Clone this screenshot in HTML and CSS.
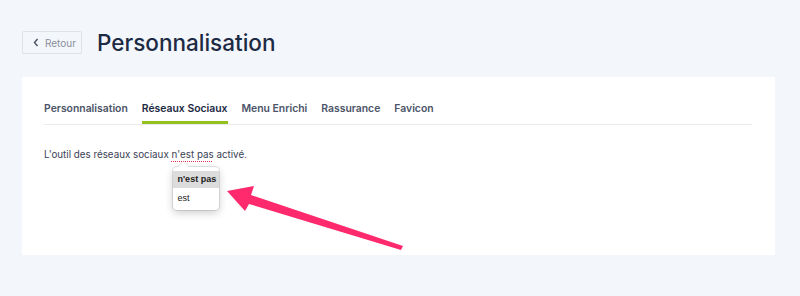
FILE: index.html
```html
<!DOCTYPE html>
<html lang="fr">
<head>
<meta charset="utf-8">
<link rel="stylesheet" href="styles.css">
</head>
<body>
<div class="page">
  <header class="header">
    <button class="back"><svg class="back-icon" width="6" height="9" viewBox="0 0 6 9"><path d="M4.5 1 L1.5 4.5 L4.5 8" fill="none" stroke="#4a5060" stroke-width="1.4"/></svg>Retour</button>
    <h1 class="title">Personnalisation</h1>
  </header>
  <section class="card">
    <nav class="tabs">
      <a class="tab">Personnalisation</a>
      <a class="tab active">Réseaux Sociaux</a>
      <a class="tab">Menu Enrichi</a>
      <a class="tab">Rassurance</a>
      <a class="tab">Favicon</a>
    </nav>
    <p class="msg">L'outil des réseaux sociaux <span class="spell">n'est pas<span class="suggest"><span class="caret"></span><span class="opt sel">n'est pas</span><span class="opt">est</span></span></span> activé.</p>
  </section>
  <svg class="arrow" width="800" height="296" viewBox="0 0 800 296">
    <polygon points="227,191 254,186 251,195 403,246 401,250 249,204 245,211" fill="#ff2a6d"/>
  </svg>
</div>
</body>
</html>
```

FILE: styles.css
```css
* { box-sizing: border-box; }
html, body { margin: 0; padding: 0; }
body {
  background: #f3f6fa;
  font-family: "Inter", "Open Sans", sans-serif;
  width: 800px;
  height: 296px;
  overflow: hidden;
}
.page {
  position: relative;
  padding: 31px 25px 0 22px;
}
.header {
  display: flex;
  align-items: center;
  gap: 15px;
  height: 23px;
}
.back {
  display: flex;
  align-items: center;
  gap: 6px;
  width: 60px;
  height: 23px;
  padding: 0 0 0 10px;
  border: 1px solid #dfe3e8;
  background: #f3f6fa;
  border-radius: 2px;
  color: #8a909c;
  font-family: inherit;
  font-size: 10px;
}
.title {
  margin: 0;
  font-size: 22.5px;
  font-weight: 500;
  color: #1d2a44;
  line-height: 23px;
}
.card {
  margin-top: 23px;
  background: #fff;
  height: 178px;
  padding: 22px 23px 0 22px;
}
.tabs {
  display: flex;
  gap: 14px;
  border-bottom: 1px solid #e8eaed;
}
.tab {
  font-size: 10.4px;
  font-weight: 600;
  color: #4c5468;
  line-height: 19px;
  padding-bottom: 3px;
  border-bottom: 3px solid transparent;
}
.tab.active {
  color: #1d2a44;
  border-bottom-color: #95c11f;
}
.msg {
  margin: 21px 0 0;
  font-size: 9.8px;
  line-height: 18px;
  color: #3b4254;
}
.spell {
  position: relative;
  text-decoration: underline dotted #e8334f;
  text-decoration-thickness: 1px;
  text-underline-offset: 3px;
}
.suggest {
  position: absolute;
  left: 2px;
  top: 18px;
  width: 46px;
  display: flex;
  flex-direction: column;
  gap: 2px;
  padding: 4px 0 3px;
  background: #fff;
  border-radius: 4px;
  box-shadow: 0 0 0 1px rgba(0,0,0,0.1), 0 3px 8px rgba(0,0,0,0.2);
  font-family: "Liberation Sans", Arial, sans-serif;
  font-size: 9px;
  color: #222;
  white-space: nowrap;
  text-decoration: none;
}
.caret {
  position: absolute;
  left: 7px;
  top: -4px;
  width: 7px;
  height: 7px;
  background: #fff;
  transform: rotate(45deg);
  box-shadow: -1px -1px 0 rgba(0,0,0,0.08);
}
.opt {
  position: relative;
  padding: 0 4px;
  height: 17px;
  line-height: 17px;
}
.opt.sel {
  background: #dcdcdc;
  font-weight: 700;
}
.arrow {
  position: absolute;
  left: 0;
  top: 0;
  pointer-events: none;
}
```
